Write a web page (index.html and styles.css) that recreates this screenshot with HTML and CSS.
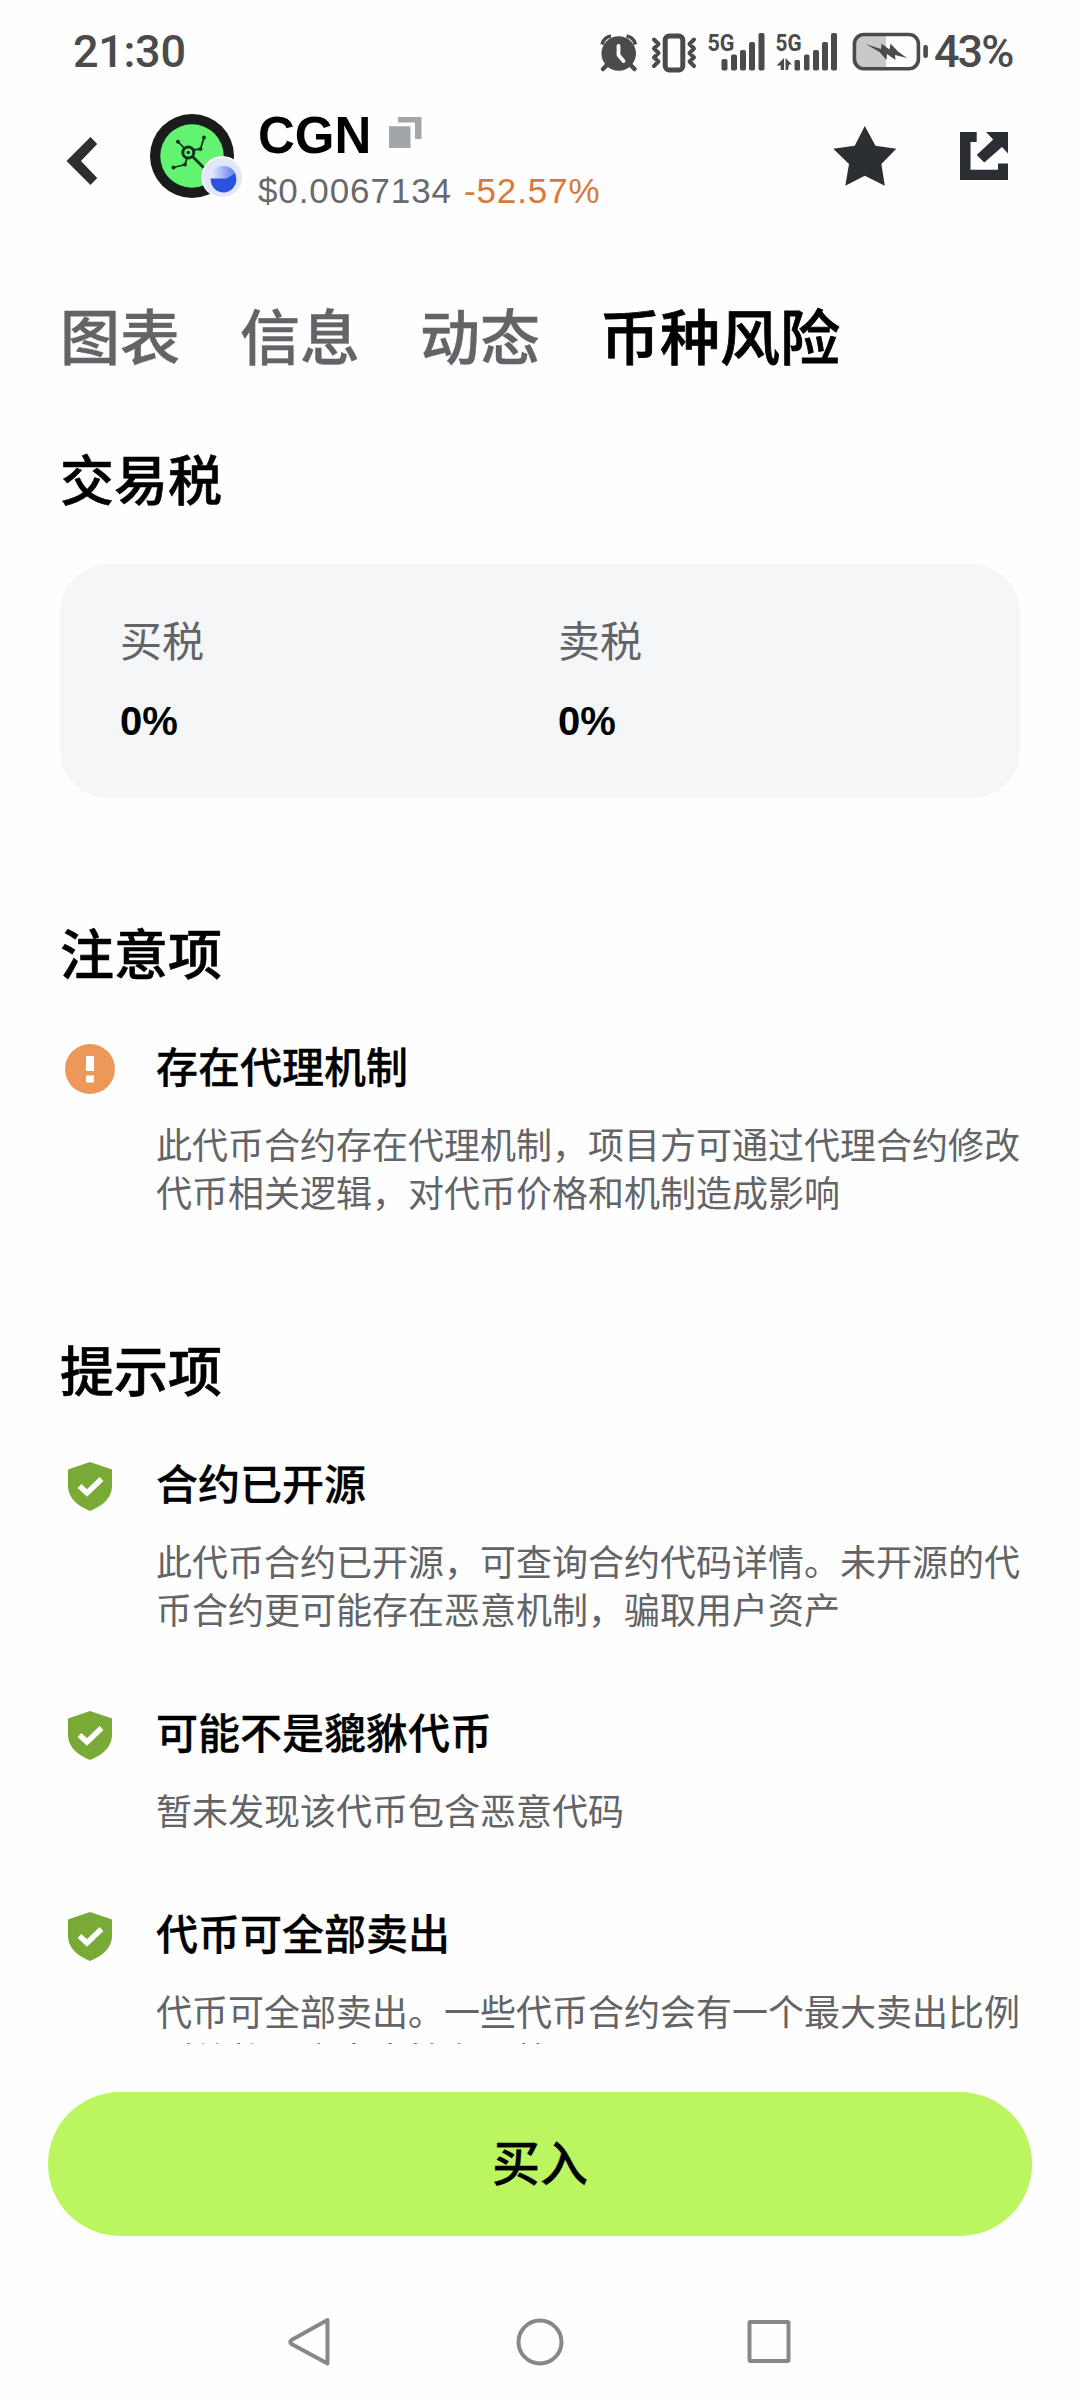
FILE: index.html
```html
<!DOCTYPE html>
<html lang="zh-CN">
<head>
<meta charset="utf-8">
<title>CGN</title>
<link rel="stylesheet" href="styles.css">
</head>
<body>
<div class="screen">
  <div class="status">
    <span class="time">21:30</span>
    <svg class="status-icons" width="334" height="46" viewBox="596 28 334 46" fill="#4b4b4b">
      <!-- alarm -->
      <circle cx="618.7" cy="52.5" r="17.3"/>
      <path d="M602 43.500a11 11 0 0 1 9-8.500M635.500 43.500a11 11 0 0 0-9-8.500" fill="none" stroke="#4b4b4b" stroke-width="3.600"/>
      <path d="M608 63l-5 5M629.500 63l5 5" stroke="#4b4b4b" stroke-width="4.500" stroke-linecap="round"/>
      <path d="M618.500 45v9l5 6" fill="none" stroke="#fff" stroke-width="3.800" stroke-linecap="round" stroke-linejoin="round"/>
      <!-- vibrate -->
      <rect x="665.200" y="35" width="17.600" height="34" rx="4" fill="none" stroke="#4b4b4b" stroke-width="5"/>
      <path d="M654 38.500l4.500 4.500-4.500 4.500 4.500 4.500-4.500 4.500 4.500 4-4.500 4.500M694 38.500l-4.500 4.500 4.500 4.500-4.500 4.500 4.500 4.500-4.500 4 4.500 4.500" fill="none" stroke="#4b4b4b" stroke-width="4" stroke-linejoin="round" stroke-linecap="round"/>
      <!-- first signal -->
      <text class="net" x="707.500" y="50" textLength="27" lengthAdjust="spacingAndGlyphs">5G</text>
      <rect x="721.500" y="58" width="6" height="11.500" rx="1.800"/><rect x="731" y="53.500" width="6" height="16" rx="1.800"/><rect x="740" y="49" width="6" height="20.500" rx="1.800"/><rect x="749" y="41" width="6" height="28.500" rx="1.800"/><rect x="758.500" y="32" width="6" height="37.500" rx="1.800"/>
      <!-- second signal -->
      <text class="net" x="775.500" y="50" textLength="26" lengthAdjust="spacingAndGlyphs">5G</text>
      <path d="M784 57v12h-3.300v-4.500h-4.200zM785.500 57l6.500 6.500h-3l-1 5.500h-2.500z"/>
      <rect x="794.500" y="59" width="5.500" height="10.500" rx="1.500"/><rect x="804" y="53.500" width="5.500" height="16" rx="1.800"/><rect x="813" y="49" width="6" height="20.500" rx="1.800"/><rect x="822" y="41" width="6" height="28.500" rx="1.800"/><rect x="831" y="32" width="6" height="37.500" rx="1.800"/>
      <!-- battery -->
      <path d="M886 34h-22a9.500 9.500 0 0 0-9.500 9.500v14a9.500 9.500 0 0 0 9.500 9.500h22z" fill="#c9c9c9"/>
      <rect x="854.400" y="33.500" width="64" height="34.300" rx="9.500" fill="none" stroke="#4b4b4b" stroke-width="3.600"/>
      <rect x="923.300" y="44" width="4.600" height="13" rx="2"/>
      <path d="M865.500 43l15.500 5 .5-5.500 8 6 1-6 7.500 8 9 6.500-12-3 .5 5-8.500-6-.5 6-7-8z"/>
    </svg>
    <span class="percent">43%</span>
  </div>

  <header class="header">
    <svg class="back" width="34" height="52" viewBox="66 135 34 52"><path d="M66.500 161L90.500 137l6.700 7-16.200 17 16.200 17-6.700 7z" fill="#2c2e32"/></svg>
    <svg class="logo" width="96" height="88" viewBox="148 112 96 88">
      <defs><linearGradient id="pie" x1="0" y1="0" x2="1" y2="0"><stop offset="0" stop-color="#e9edff"/><stop offset="1" stop-color="#5b78ea"/></linearGradient></defs>
      <circle cx="192" cy="156" r="42" fill="#1b1b1b"/>
      <circle cx="192" cy="156" r="31.700" fill="#62f471"/>
      <g stroke="#12351a" fill="none" stroke-width="2">
        <circle cx="188.300" cy="152.500" r="5.500" stroke-width="3"/>
        <path d="M184 148l-6-6.500M200.500 149l3.500-11.500" stroke-width="1.800"/>
        <path d="M193 150l7.500-1M187 158l-2 6.500-11.500 3" stroke-width="1.800"/>
        <path d="M192 156l14 14" stroke-width="2.800"/>
      </g>
      <g fill="#12351a"><circle cx="188.300" cy="152.500" r="1.800"/><circle cx="178" cy="141.800" r="2"/><circle cx="204" cy="137.500" r="2"/><circle cx="200.500" cy="149" r="2"/><circle cx="185" cy="164.500" r="2"/><circle cx="173.500" cy="167.500" r="2"/></g>
      <circle cx="222.300" cy="177" r="21" fill="#fff"/>
      <circle cx="222.500" cy="177.500" r="19.500" fill="#e2e6fa"/>
      <circle cx="223.500" cy="178.500" r="12.800" fill="url(#pie)"/>
      <path d="M210.700 178.500h16l8-5a12.800 12.800 0 1 1-24 5z" fill="#2b52df"/>
    </svg>
    <div class="coin">
      <div class="coin-name"><span>CGN</span>
        <svg width="33" height="32" viewBox="389 116 33 32" fill="#a3a6a9"><path d="M389 125.300h21.500V147H389zM398 116h23.500v22H415v-16.500h-17z"/></svg>
      </div>
      <div class="coin-price"><span class="price">$0.0067134</span><span class="change">-52.57%</span></div>
    </div>
    <svg class="star" width="64" height="62" viewBox="833 125 64 62"><path d="M864.800 126l10.700 19.700 20.800 3L881.400 164l3.400 21.800-20-10.100-19.500 10.100 3.700-21.800-15.700-15.300 21.400-3z" fill="#2b2e32"/></svg>
    <svg class="share" width="48" height="48" viewBox="960 132 48 48" fill="#2b2e32"><path d="M960 132h16.700v10h-6.200v27.700H998v-6.200h10V180h-48zM986 132h22v21.400l-6-6.400-17.700 15.400-7.600-7.400 16.500-15.600z"/></svg>
  </header>

  <nav class="tabs"><span>图表</span><span>信息</span><span>动态</span><span class="active">币种风险</span></nav>

  <main class="content">
    <section>
      <h2>交易税</h2>
      <div class="tax-card">
        <div><p class="tax-label">买税</p><p class="tax-value">0%</p></div>
        <div><p class="tax-label">卖税</p><p class="tax-value">0%</p></div>
      </div>
    </section>
    <section class="risks">
      <h2>注意项</h2>
      <article class="item">
        <svg class="mark" width="60" height="60" viewBox="0 0 60 60"><circle cx="30" cy="30" r="25" fill="#ed9858"/><path d="M26 17h8v15h-8zM26 36.500h8v7h-8z" fill="#fff"/></svg>
        <div><h3>存在代理机制</h3><p>此代币合约存在代理机制，项目方可通过代理合约修改代币相关逻辑，对代币价格和机制造成影响</p></div>
      </article>
    </section>
    <section class="risks">
      <h2>提示项</h2>
      <article class="item">
        <svg class="mark" width="60" height="60" viewBox="0 0 60 60"><path d="M30 6l22 7.500v17c0 11-10 20-22 24.500C18 50.500 8 41.500 8 30.500v-17z" fill="#79aa35"/><path d="M19.500 30l7.500 7L41.500 23" fill="none" stroke="#fff" stroke-width="5.600"/></svg>
        <div><h3>合约已开源</h3><p>此代币合约已开源，可查询合约代码详情。未开源的代币合约更可能存在恶意机制，骗取用户资产</p></div>
      </article>
      <article class="item">
        <svg class="mark" width="60" height="60" viewBox="0 0 60 60"><path d="M30 6l22 7.500v17c0 11-10 20-22 24.500C18 50.500 8 41.500 8 30.500v-17z" fill="#79aa35"/><path d="M19.500 30l7.500 7L41.500 23" fill="none" stroke="#fff" stroke-width="5.600"/></svg>
        <div><h3>可能不是貔貅代币</h3><p>暂未发现该代币包含恶意代码</p></div>
      </article>
      <article class="item">
        <svg class="mark" width="60" height="60" viewBox="0 0 60 60"><path d="M30 6l22 7.500v17c0 11-10 20-22 24.500C18 50.500 8 41.500 8 30.500v-17z" fill="#79aa35"/><path d="M19.500 30l7.500 7L41.500 23" fill="none" stroke="#fff" stroke-width="5.600"/></svg>
        <div><h3>代币可全部卖出</h3><p>代币可全部卖出。一些代币合约会有一个最大卖出比例（总数，令未来持有，等</p></div>
      </article>
    </section>
  </main>

  <footer class="footer">
    <button class="buy">买入</button>
    <svg class="sysnav" width="1080" height="60" viewBox="0 2312 1080 60" fill="none" stroke="#888" stroke-width="4" stroke-linejoin="round">
      <path d="M327.500 2320v43.500L291.500 2344q-2.500-2 0-4z"/>
      <circle cx="540" cy="2342" r="21.500"/>
      <rect x="749.500" y="2322" width="39" height="39" rx="1"/>
    </svg>
  </footer>
</div>
</body>
</html>
```
FILE: styles.css
```css
* { box-sizing: border-box; }
body, h2, h3, p { margin: 0; }
body {
  background: #fefefe;
  color: #000;
  font-family: "Noto Sans CJK SC", sans-serif;
}
.screen {
  width: 1080px;
  height: 2400px;
  display: flex;
  flex-direction: column;
  overflow: hidden;
}

.status {
  height: 104px;
  padding: 0 66px 0 73px;
  display: flex;
  align-items: center;
  flex: none;
  color: #4b4b4b;
  font: 500 45px/60px Roboto, sans-serif;
}
.time { letter-spacing: -.3px; }
.status-icons { margin-left: auto; }
.percent { width: 80px; margin-left: 4px; letter-spacing: -2px; }
.net { font: 700 24px Roboto, sans-serif; }

.header {
  height: 110px;
  display: flex;
  align-items: center;
  padding: 0 72px 0 66px;
  flex: none;
}
.back { margin-top: 4px; }
.logo { margin-left: 48px; margin-top: -6px; }
.coin {
  margin-left: 14px;
  font-family: "Liberation Sans", sans-serif;
}
.coin-name {
  display: flex;
  align-items: center;
  gap: 18px;
  height: 60px;
  font-size: 51px;
  font-weight: 700;
  line-height: 60px;
}
.coin-name span { letter-spacing: 0; }
.coin-name svg { margin-top: -6px; }
.coin-price {
  margin-top: 3px;
  display: flex;
  gap: 12px;
  font-size: 35px;
  line-height: 44px;
  letter-spacing: .9px;
}
.price { color: #67696c; }
.change { color: #d9783d; }
.star { margin-left: auto; margin-top: -6px; }
.share { margin-left: 63px; margin-top: -6px; }

.tabs {
  height: 170px;
  padding: 36px 60px 0;
  display: flex;
  gap: 60px;
  flex: none;
  color: #626467;
  font-size: 60px;
  font-weight: 500;
  line-height: 168px;
  -webkit-text-stroke: .4px;
}
.tabs .active { color: #000; -webkit-text-stroke: .8px; }

.content {
  height: 1660px;
  padding: 54px 60px 0;
  overflow: hidden;
  flex: none;
}
h2 {
  font-size: 54px;
  font-weight: 500;
  line-height: 80px;
  -webkit-text-stroke: .6px;
}
.tax-card {
  height: 234px;
  margin-top: 46px;
  padding: 42px 60px;
  display: grid;
  grid-template-columns: 438px 1fr;
  border-radius: 48px;
  background: #f4f6f8;
}
.tax-label {
  color: #626467;
  font-size: 42px;
  line-height: 66px;
}
.tax-value {
  margin-top: 19px;
  font: 700 40px/60px "Liberation Sans", sans-serif;
}
.risks { margin-top: 114px; }
.item {
  display: grid;
  grid-template-columns: 60px 1fr;
  gap: 36px;
}
h2 + .item { margin-top: 40px; }
.item + .item { margin-top: 66px; }
.mark { margin-top: 7px; }
h3 {
  font-size: 42px;
  font-weight: 500;
  line-height: 66px;
  -webkit-text-stroke: .3px;
}
.item p {
  margin-top: 21px;
  color: #626467;
  font-size: 36px;
  line-height: 48px;
}

.footer {
  flex: 1;
  padding-top: 48px;
  display: flex;
  flex-direction: column;
}
.buy {
  height: 144px;
  margin: 0 48px;
  padding: 0 0 8px;
  border: 0;
  border-radius: 72px;
  background: #bbf560;
  color: #000;
  font: 500 48px/136px "Noto Sans CJK SC", sans-serif;
  -webkit-text-stroke: .3px;
}
.sysnav { margin-top: 76px; }
```
